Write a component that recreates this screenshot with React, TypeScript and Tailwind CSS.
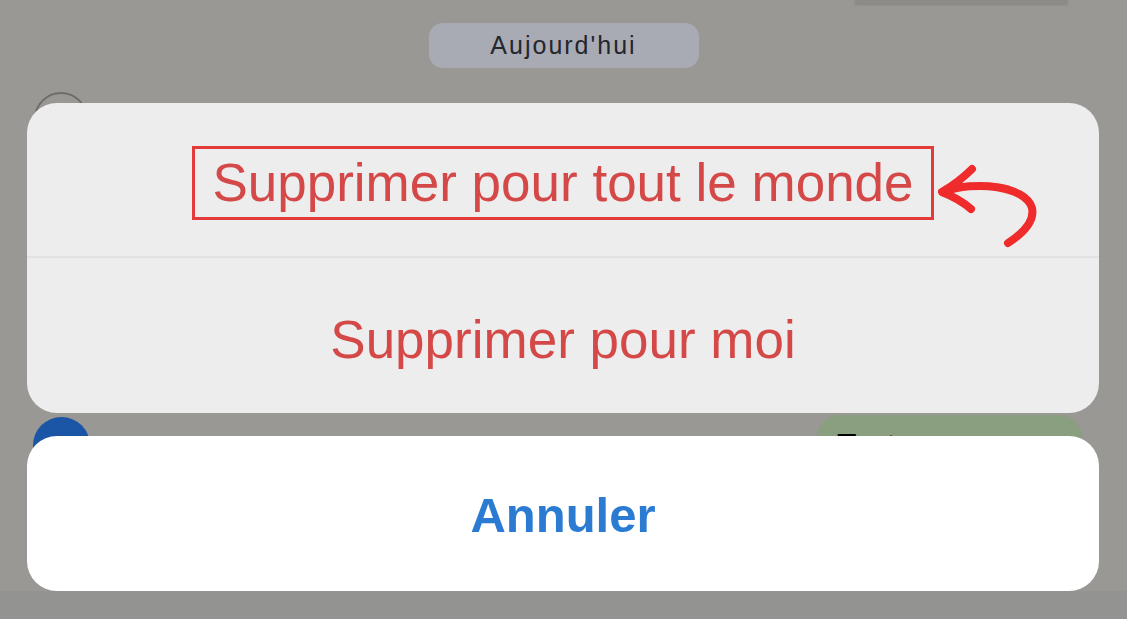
import React from 'react';

const SANS = { fontFamily: '"Liberation Sans", Arial, sans-serif' };

const CurvedArrow: React.FC = () => (
  <svg
    className="absolute left-[908px] top-[57px] w-[105px] h-[90px]"
    viewBox="935 160 105 90"
    fill="none"
  >
    <path
      d="M943 192 C975 180 1026 186 1032 208 C1035 222 1022 234 1008 243"
      stroke="#ef2b2b"
      strokeWidth="8"
      strokeLinecap="round"
    />
    <path
      d="M972 169 C962 179 952 186 942 192 C952 196 962 201 971 209"
      stroke="#ef2b2b"
      strokeWidth="8"
      strokeLinecap="round"
      strokeLinejoin="round"
    />
  </svg>
);

export default function App() {
  return (
    <div className="relative w-full h-[619px] overflow-hidden bg-[#9a9894]" style={SANS}>
      {/* chat behind the sheet */}
      <div className="flex flex-col h-full">
        <div className="ml-[855px] w-[213px] h-[4px] bg-[#8c8b87] shadow-sm" />
        <div className="mt-[19px] mx-auto w-[270px] h-[45px] rounded-[14px] bg-[#a9abb4] flex items-center justify-center">
          <span className="text-[25px] font-medium tracking-[2px] text-[#23262c]">Aujourd'hui</span>
        </div>
        <div className="mt-[24px] ml-[34px] w-[54px] h-[54px] rounded-full border-2 border-[#6e6d6a]" />
        <div className="mt-[269px] flex items-start">
          <div className="ml-[33px] mt-[2px] w-[57px] h-[57px] rounded-full bg-[#1b55a5]" />
          <div className="ml-auto mr-[45px] w-[265px] h-[80px] rounded-[22px] bg-[#8a9e80] pl-[20px] pt-[6px]">
            <span className="text-[32px] text-black">Test</span>
          </div>
        </div>
        <div className="mt-auto h-[28px] bg-[#939391]" />
      </div>

      {/* action sheet */}
      <div className="absolute left-[27px] right-[28px] top-[103px] flex flex-col gap-[23px]">
        <div className="h-[310px] rounded-[30px] bg-[#ededed] flex flex-col overflow-hidden">
          <div className="relative h-[155px] border-b-2 border-[#e2e2e2] flex items-center justify-center pt-[6px]">
            <span className="inline-flex items-center h-[74px] px-[17px] border-[3px] border-[#e53a3a] text-[53px] text-[#d44848] leading-none">
              Supprimer pour tout le monde
            </span>
            <CurvedArrow />
          </div>
          <div className="flex-1 flex items-center justify-center pt-[8px]">
            <span className="text-[53px] text-[#d44848] leading-none">Supprimer pour moi</span>
          </div>
        </div>
        <div className="h-[155px] rounded-[30px] bg-white flex items-center justify-center pt-[3px]">
          <span className="text-[49px] font-bold text-[#2b7bd3] leading-none">Annuler</span>
        </div>
      </div>
    </div>
  );
}
